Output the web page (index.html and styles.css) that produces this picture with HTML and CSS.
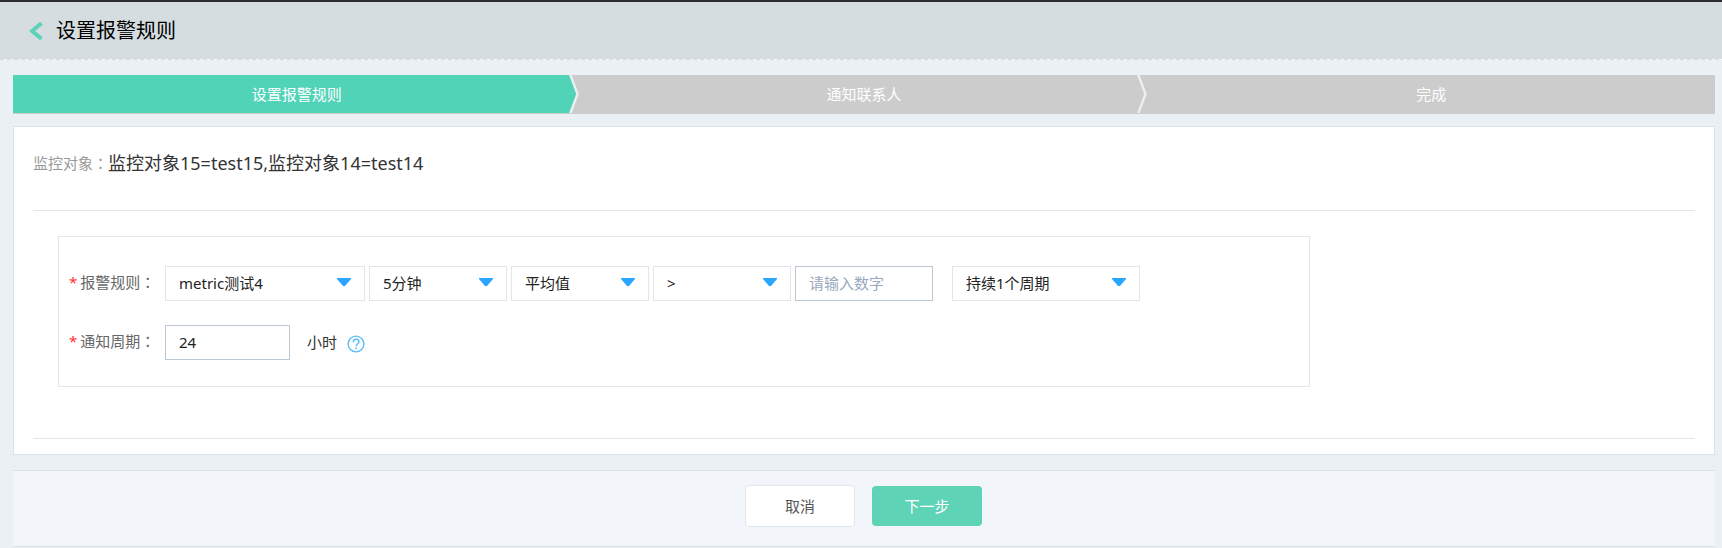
FILE: index.html
```
<!DOCTYPE html>
<html lang="zh-CN">
<head>
<meta charset="utf-8">
<title>设置报警规则</title>
<link rel="stylesheet" href="styles.css">
</head>
<body>
<header class="page-header">
  <a class="back" href="#" aria-label="返回"><svg width="14" height="18" viewBox="0 0 14 18"><path d="M12.500 1.200L3 9l9.500 7.800" fill="none" stroke="#5dd2b6" stroke-width="4"/></svg></a>
  <h1 class="title">设置报警规则</h1>
</header>
<main class="content">
  <ol class="steps">
    <li class="step active"><span>设置报警规则</span><svg class="step-arrow" width="12" height="38" viewBox="0 0 12 38"><path d="M2 0H12v38H2L9.500 19z" fill="#ccc"/><path d="M2 -1L9.500 19L2 39" fill="none" stroke="#ebf0f4" stroke-width="2.400"/></svg></li>
    <li class="step"><span>通知联系人</span><svg class="step-arrow" width="12" height="38" viewBox="0 0 12 38"><path d="M2 -1L9.500 19L2 39" fill="none" stroke="#ebf0f4" stroke-width="2.400"/></svg></li>
    <li class="step"><span>完成</span></li>
  </ol>
  <form class="rule-form">
    <section class="panel">
      <p class="target"><span class="target-label">监控对象<span class="colon" lang="zh-TW">：</span></span><span class="target-value">监控对象15=test15,监控对象14=test14</span></p>
      <div class="rules">
        <div class="row">
          <label class="label" for="metric"><span class="required">*</span>报警规则<span class="colon" lang="zh-TW">：</span></label>
          <div class="fields">
            <div class="select select-metric"><select id="metric"><option>metric测试4</option></select><svg class="caret" width="14" height="8" viewBox="0 0 14 8"><path d="M0 0h14v1L8 8H6L0 1z"/></svg></div>
            <div class="select"><select aria-label="统计周期"><option>5分钟</option></select><svg class="caret" width="14" height="8" viewBox="0 0 14 8"><path d="M0 0h14v1L8 8H6L0 1z"/></svg></div>
            <div class="select"><select aria-label="统计方法"><option>平均值</option></select><svg class="caret" width="14" height="8" viewBox="0 0 14 8"><path d="M0 0h14v1L8 8H6L0 1z"/></svg></div>
            <div class="select"><select aria-label="比较符"><option>&gt;</option></select><svg class="caret" width="14" height="8" viewBox="0 0 14 8"><path d="M0 0h14v1L8 8H6L0 1z"/></svg></div>
            <input class="input threshold" type="text" placeholder="请输入数字" aria-label="阈值">
            <div class="select select-duration"><select aria-label="持续周期"><option>持续1个周期</option></select><svg class="caret" width="14" height="8" viewBox="0 0 14 8"><path d="M0 0h14v1L8 8H6L0 1z"/></svg></div>
          </div>
        </div>
        <div class="row">
          <label class="label" for="period"><span class="required">*</span>通知周期<span class="colon" lang="zh-TW">：</span></label>
          <div class="fields">
            <input class="input period" id="period" type="text" value="24">
            <span class="unit">小时</span>
            <svg class="help" width="18" height="18" viewBox="0 0 18 18" fill="none" stroke="#5bbcf8"><circle cx="9" cy="9" r="7.900" stroke-width="1.400"/><path d="M6.200 7.200C6.200 5.200 7.400 4.200 9.100 4.200S12 5.300 12 6.800C12 8.700 9.200 8.900 9.200 11.200" stroke-width="1.500"/><path d="M9.200 12.500v1.700" stroke-width="1.700"/></svg>
          </div>
        </div>
      </div>
    </section>
    <div class="actions">
      <button class="btn btn-cancel" type="button">取消</button>
      <button class="btn btn-next" type="submit">下一步</button>
    </div>
  </form>
</main>
</body>
</html>
```
FILE: styles.css
```
* { box-sizing: border-box; }
body {
  margin: 0;
  background: #ebf0f4;
  color: #333;
  font: 15px/20px "Noto Sans", "Noto Sans CJK SC", sans-serif;
}
.page-header {
  display: flex;
  align-items: center;
  gap: 13px;
  height: 60px;
  padding: 0 29px;
  border-top: 2px solid #2b2b35;
  background:
    repeating-linear-gradient(90deg, #d5dde0 0 4px, #f6f9fa 4px 7px) bottom / 100% 1px no-repeat,
    #d5dde0;
}
.back { display: flex; }
.title {
  margin: 0;
  color: #000;
  font-size: 20px;
  line-height: 28px;
  font-weight: 400;
}
.content { padding: 15px 7px 0 13px; }
.steps {
  display: grid;
  grid-template-columns: repeat(3, 1fr);
  margin: 0 0 12px;
  padding: 0;
  list-style: none;
  border-bottom: 1px solid #ccc;
}
.step {
  position: relative;
  height: 38px;
  background: #ccc;
  color: #fff;
  line-height: 38px;
  text-align: center;
}
.step.active { background: #51d3b7; }
.step-arrow {
  position: absolute;
  top: 0;
  right: 0;
}
.panel {
  padding: 24px 19px 15px;
  border: 1px solid #dce2e6;
  background: #fff;
}
.target {
  display: flex;
  align-items: center;
  margin: 0;
  padding-bottom: 35px;
  border-bottom: 1px solid #dfe6ec;
}
.target-label { color: #999; }
.target-value { font-size: 18px; line-height: 24px; }
.colon { font-family: "Noto Sans CJK TC", sans-serif; line-height: 1; }
.rules {
  display: grid;
  gap: 24px;
  max-width: 1252px;
  margin: 25px 0 0 25px;
  padding: 29px 10px 26px;
  border: 1px solid #dfe6ec;
}
.panel::after {
  content: "";
  display: block;
  margin-top: 51px;
  border-top: 1px solid #dfe6ec;
}
.row { display: flex; align-items: center; }
.label {
  width: 96px;
  padding-bottom: 3px;
  color: #666;
  white-space: nowrap;
}
.required { margin-right: 3px; color: #f33; }
.fields { display: flex; align-items: center; gap: 4px; }
.select {
  display: grid;
  align-items: center;
  width: 138px;
}
.select-metric { width: 200px; }
.select-duration { width: 188px; margin-left: 15px; }
.select select {
  grid-area: 1 / 1;
  width: 100%;
  appearance: none;
  border-radius: 0;
}
.select select, .input {
  height: 35px;
  margin: 0;
  padding: 0 13px 2px;
  border: 1px solid #e5e5e5;
  background: #fff;
  color: #222;
  font: inherit;
}
.caret {
  grid-area: 1 / 1;
  justify-self: end;
  margin: 0 14px 3px 0;
  fill: #2ba6ff;
  pointer-events: none;
}
.input { border-color: #bcc8d6; }
.input::placeholder { color: #99a9bf; }
.threshold { width: 138px; }
.period { width: 125px; }
.unit { margin: 0 6px 0 13px; padding-bottom: 2px; }
.help { margin-top: 2px; }
.actions {
  display: flex;
  justify-content: center;
  align-items: center;
  gap: 17px;
  margin-top: 15px;
  padding: 14px 1px 19px 0;
  border: solid #dae2e7;
  border-width: 1px 0;
  background: #f2f6fb;
}
.btn {
  width: 110px;
  padding: 10px 0;
  border: 0;
  border-radius: 4px;
  font: inherit;
}
.btn-cancel {
  border: 1px solid #dfe6ec;
  background: #fff;
  color: #555;
}
.btn-next { background: #5fd3b6; color: #fff; }
```
